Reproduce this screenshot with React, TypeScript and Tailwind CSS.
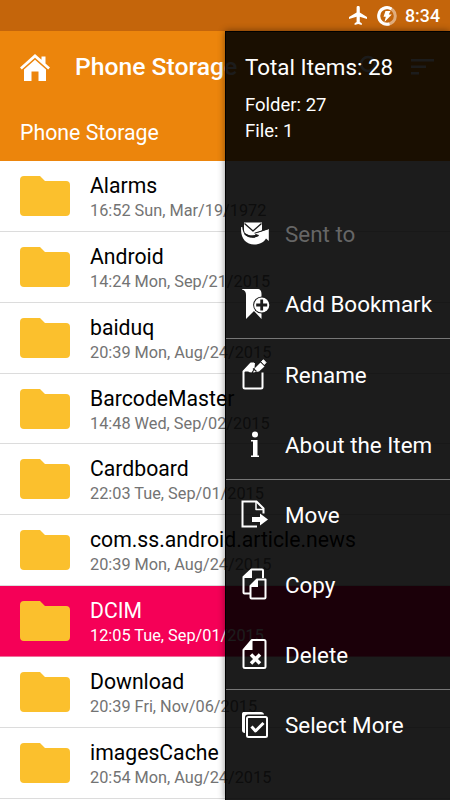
import type { ReactNode } from 'react'
import clsx from 'clsx'

const files = [
  { name: 'Alarms', date: '16:52 Sun, Mar/19/1972' },
  { name: 'Android', date: '14:24 Mon, Sep/21/2015' },
  { name: 'baiduq', date: '20:39 Mon, Aug/24/2015' },
  { name: 'BarcodeMaster', date: '14:48 Wed, Sep/02/2015' },
  { name: 'Cardboard', date: '22:03 Tue, Sep/01/2015' },
  { name: 'com.ss.android.article.news', date: '20:39 Mon, Aug/24/2015' },
  { name: 'DCIM', date: '12:05 Tue, Sep/01/2015', selected: true },
  { name: 'Download', date: '20:39 Fri, Nov/06/2015' },
  { name: 'imagesCache', date: '20:54 Mon, Aug/24/2015' }
]

const Icon = ({ children }: { children: ReactNode }) => (
  <svg viewBox="0 0 32 32" className="h-8 w-8 shrink-0" fill="none" stroke="white" strokeWidth="2" strokeLinejoin="round">
    {children}
  </svg>
)

const SendIcon = () => (
  <Icon>
    <path d="M5 4.500h18v8l-6 2.500-1 2-5 .500-5-2-1-3z" fill="white" stroke="none" />
    <path d="M5.500 5.500l8.500 7.500 8.500-7.500" stroke="#1b1b1b" strokeWidth="1.300" />
    <path d="M2.200 9C1 20 7 26.500 15 26.500c6 0 10-2.500 12-6l2.800 2.500V11L16 15.500l4 1.800c-2 2-5 2.700-8.500 2.200C7 19 3.800 15.500 3.200 9z" fill="white" stroke="none" />
    <path d="M5.500 15.500c3.500 3.300 9 4 14 1.800" stroke="#1b1b1b" strokeWidth="1.400" />
    <path d="M29 10.800l-7 2.400-6.500 2" stroke="#1b1b1b" strokeWidth="1" />
  </Icon>
)

const BookmarkIcon = () => (
  <Icon>
    <path d="M3 1h15c3.500 0 4.500 2 4.500 5v25l-7.500-8-8 8V7C7 4 6 2.500 3 1.500z" fill="white" stroke="none" />
    <circle cx="22.700" cy="17" r="8.600" fill="#1b1b1b" stroke="none" />
    <circle cx="22.700" cy="17" r="7.600" fill="white" stroke="none" />
    <path d="M22.700 11.500v11M17.200 17h11" stroke="#1b1b1b" strokeWidth="2.800" />
  </Icon>
)

const RenameIcon = () => (
  <Icon>
    <g transform="translate(0 1)">
      <path d="M15 4.500h-3l-7.500 8V28c0 1 .500 1.500 1.500 1.500h16c1 0 1.500-.500 1.500-1.500V13.500" />
      <path d="M12 4v8.500H4z" fill="white" stroke="none" />
      <path d="M12 4h4l-.500 5-3 4.500-3-.500z" fill="white" stroke="none" />
      <path d="M14 13.500l2-4.500 5.500-5.500 4 4-5.500 5z" fill="white" stroke="none" />
      <path d="M22.500 2.500L24.500.8 27 3.500 25.300 5.500z" fill="white" strokeWidth="1" />
      <path d="M14 9.500l3.500 3" stroke="#1b1b1b" strokeWidth="1.200" />
    </g>
  </Icon>
)

const InfoIcon = () => (
  <Icon>
    <g transform="translate(0 1)">
      <circle cx="16" cy="5.500" r="3" fill="white" stroke="none" />
      <path d="M12 11h6.500v15.500H20V28h-8v-1.500h2V12.500H12z" fill="white" stroke="none" />
    </g>
  </Icon>
)

const MoveIcon = () => (
  <Icon>
    <path d="M18 28.500H3.500v-25h14l7 7v5" strokeLinejoin="miter" />
    <path d="M17 3.500v8h8" strokeWidth="1.500" />
    <path d="M13 19h8v-3.500l8 6-8 6V24h-8z" fill="white" stroke="none" />
  </Icon>
)

const CopyIcon = () => (
  <Icon>
    <path d="M11 25.500H5.500c-.6 0-1-.4-1-1V9l8-7.500h10.500c.6 0 1 .4 1 1V10" />
    <path d="M13 1.500V10H4z" fill="white" stroke="none" />
    <path d="M18 11.500h8.500v18c0 .6-.4 1-1 1H12.500c-.6 0-1-.4-1-1V18z" />
    <path d="M19 11v8h-8z" fill="white" stroke="none" />
  </Icon>
)

const DeleteIcon = () => (
  <Icon>
    <path d="M13 2h12c1 0 1.500.500 1.500 1.500v25c0 1-.500 1.500-1.500 1.500H6c-1 0-1.500-.500-1.500-1.500V12z" />
    <path d="M13.500 1.500v10.500H4z" fill="white" stroke="none" />
    <path d="M12 16.500l9 9M21 16.500l-9 9" strokeWidth="3.500" />
  </Icon>
)

const SelectIcon = () => (
  <Icon>
    <path d="M6 24c-2 0-3-1-3-3V5c0-1.500 1-2 2-2h17c1.500 0 3 1 3 2.500H9C7 5.500 6 6.500 6 8.500z" fill="white" stroke="none" />
    <rect x="8" y="8" width="20" height="20" rx="1.500" />
    <path d="M12.500 17.500l4 4.500 8-8" strokeWidth="3" />
  </Icon>
)

const menu = [
  { label: 'Sent to', icon: SendIcon, disabled: true },
  { label: 'Add Bookmark', icon: BookmarkIcon, divider: true },
  { label: 'Rename', icon: RenameIcon },
  { label: 'About the Item', icon: InfoIcon, divider: true },
  { label: 'Move', icon: MoveIcon },
  { label: 'Copy', icon: CopyIcon },
  { label: 'Delete', icon: DeleteIcon, divider: true },
  { label: 'Select More', icon: SelectIcon }
]

const FolderIcon = () => (
  <svg viewBox="0 0 50 40" className="h-10 w-[50px] shrink-0">
    <path d="M4 0h16l5 5h21a4 4 0 0 1 4 4v27a4 4 0 0 1-4 4H4a4 4 0 0 1-4-4V4a4 4 0 0 1 4-4z" fill="#fbc02d" />
  </svg>
)

function StatusBar() {
  return (
    <div className="flex h-[31px] items-center justify-end bg-[#c4650b] pr-2.5 text-white">
      <svg viewBox="0 0 18 19" className="mr-[10px] h-[19px] w-[18px]" fill="currentColor">
        <path d="M18 13v-1.900l-7.200-4.500V1.500a1.600 1.600 0 0 0-3.200 0v5.100L0 11.100V13l7.600-2.300V16l-2 1.300V19l3.600-1 3.600 1v-1.700L10.800 16v-5.300z" />
      </svg>
      <svg viewBox="0 0 20 20" className="mr-[8px] h-5 w-5" fill="none">
        <circle cx="10" cy="10" r="8.300" stroke="#e0ac7c" strokeWidth="3" />
        <path d="M14.500 3A8.300 8.300 0 1 0 12.500 17.900" stroke="white" strokeWidth="3" />
        <path d="M8.500 5h5l-1.700 3.500h3L7.500 16l1.300-5.200H6.500z" fill="white" />
      </svg>
      <span className="pt-px text-[17.8px] font-medium leading-none">8:34</span>
    </div>
  )
}

function Toolbar() {
  return (
    <div className="h-[130px] bg-[#ec850c] text-white">
      <div className="flex h-[72px] items-center pl-5 pr-4">
        <svg viewBox="0 0 30 27" className="h-[27px] w-[30px]" fill="currentColor">
          <path d="M15 0L0 13.500l1.800 2L15 3.800l13.200 11.700 1.800-2-4.500-4V2.500h-4v3.300z" />
          <path d="M15 5.800L4 15.500V27h7.500v-9.500h7V27H26V15.500z" />
        </svg>
        <h1 className="ml-[25px] pt-px text-[24.7px] font-medium leading-none">Phone Storage</h1>
        <svg viewBox="0 0 24 24" className="ml-auto h-6 w-6" fill="none" stroke="currentColor" strokeWidth="2.500">
          <circle cx="9" cy="9" r="7" />
          <path d="M14 14l7 7" />
        </svg>
        <svg viewBox="0 0 24 16" className="ml-[27px] h-4 w-6" fill="currentColor">
          <path d="M1 0h23v2.500H1zM1 6.500h15V9H1zM1 13h8v2.500H1z" />
        </svg>
      </div>
      <div className="flex h-[58px] items-center pt-0.5 pl-5 text-[21.3px]">Phone Storage</div>
    </div>
  )
}

export default function App() {
  return (
    <div className="relative h-[800px] w-[450px] overflow-hidden bg-white font-[Roboto,sans-serif]">
      <StatusBar />
      <Toolbar />

      {/* File list */}
      <ul>
        {files.map((file) => (
          <li
            key={file.name}
            className={clsx(
              'flex h-[70.87px] items-center border-b pl-5',
              file.selected ? 'border-[#f0709a] bg-[#f50057] text-white' : 'border-[#dcdcdc] text-black'
            )}
          >
            <FolderIcon />
            <div className="ml-5 whitespace-nowrap pt-[2px]">
              <p className="text-[21.2px] leading-[27px]">{file.name}</p>
              <p className={clsx('pt-px text-[16.3px] leading-[22px]', !file.selected && 'text-[#737373]')}>{file.date}</p>
            </div>
          </li>
        ))}
      </ul>

      {/* Context drawer */}
      <aside className="absolute bottom-0 right-0 top-[31px] w-[225px] border-l border-t border-black bg-black/89 text-white shadow-[0_0_7px_rgba(0,0,0,0.45)]">
        <div className="h-[130px] pl-[19px] pt-[21px] leading-none">
          <p className="text-[22.4px] leading-[28px]">Total Items: 28</p>
          <p className="mt-[11px] text-[18.5px] leading-[26px]">Folder: 27</p>
          <p className="text-[18.5px] leading-[26px]">File: 1</p>
        </div>
        <ul className="mt-[37px]">
          {menu.map((item) => (
            <li
              key={item.label}
              className={clsx('flex h-[70.15px] items-center border-b pl-[13px]', item.divider ? 'border-[#777]' : 'border-transparent')}
            >
              <item.icon />
              <span className={clsx('ml-[14px] whitespace-nowrap pt-[3px] text-[22.4px]', item.disabled && 'text-[#666]')}>{item.label}</span>
            </li>
          ))}
        </ul>
      </aside>
    </div>
  )
}
